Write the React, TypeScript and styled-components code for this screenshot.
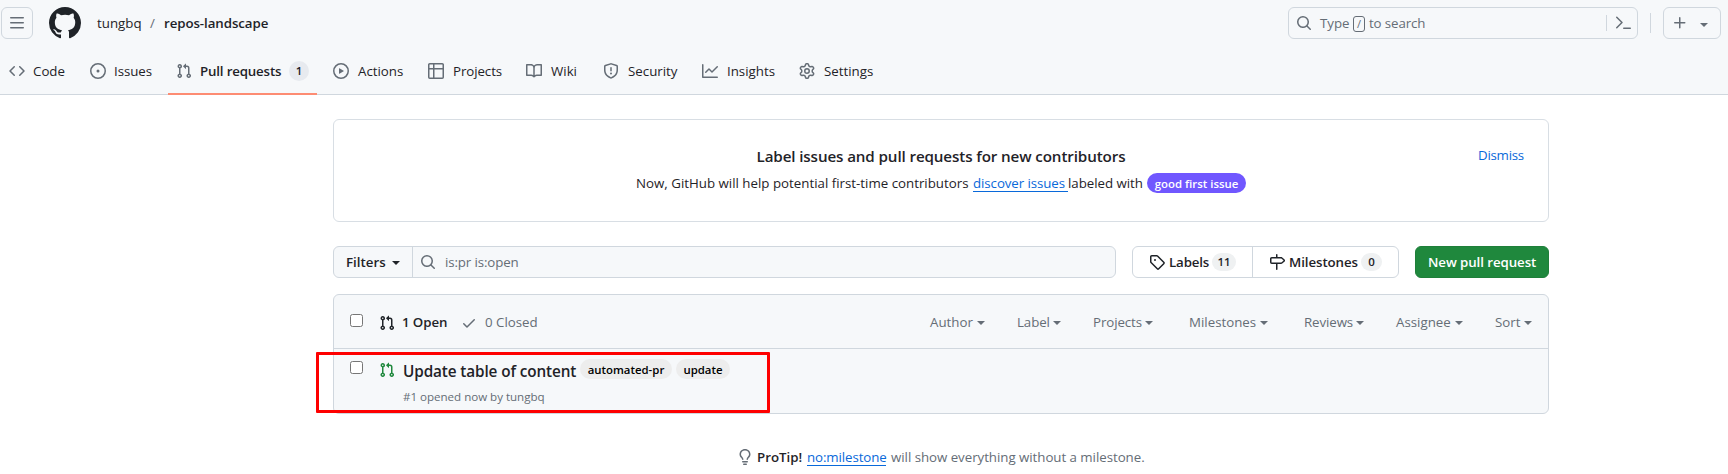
import React from 'react';
import styled, { createGlobalStyle, css } from 'styled-components';

const c = {
  fg: '#1f2328',
  muted: '#656d76',
  border: '#d0d7de',
  subtle: '#f6f8fa',
  link: '#0969da',
  green: '#1f883d',
};

const GlobalStyle = createGlobalStyle`
  *, *::before, *::after { box-sizing: border-box; }
  body {
    margin: 0;
    background: #fff;
    color: ${c.fg};
    font-family: 'Open Sans', 'Noto Sans', sans-serif;
    font-size: 13.3px;
    line-height: 20px;
    overflow: hidden;
  }
`;

const paths = {
  bars: 'M1 2.75A.75.75 0 0 1 1.75 2h12.5a.75.75 0 0 1 0 1.5H1.75A.75.75 0 0 1 1 2.75Zm0 5A.75.75 0 0 1 1.75 7h12.5a.75.75 0 0 1 0 1.5H1.75A.75.75 0 0 1 1 7.75ZM1.75 12h12.5a.75.75 0 0 1 0 1.5H1.75a.75.75 0 0 1 0-1.5Z',
  github: 'M8 0c4.42 0 8 3.58 8 8a8.013 8.013 0 0 1-5.45 7.59c-.4.08-.55-.17-.55-.38 0-.27.01-1.13.01-2.2 0-.75-.25-1.23-.54-1.48 1.78-.2 3.65-.88 3.65-3.95 0-.88-.31-1.59-.82-2.15.08-.2.36-1.02-.08-2.12 0 0-.67-.22-2.2.82-.64-.18-1.32-.27-2-.27-.68 0-1.36.09-2 .27-1.53-1.03-2.2-.82-2.2-.82-.44 1.1-.16 1.92-.08 2.12-.51.56-.82 1.28-.82 2.15 0 3.06 1.86 3.75 3.64 3.95-.23.2-.44.55-.51 1.07-.46.21-1.61.55-2.33-.66-.15-.24-.6-.83-1.23-.82-.67.01-.27.38.01.53.34.19.73.9.82 1.13.16.45.68 1.31 2.69.94 0 .67.01 1.3.01 1.49 0 .21-.15.45-.55.38A7.995 7.995 0 0 1 0 8c0-4.42 3.58-8 8-8Z',
  code: 'm11.28 3.22 4.25 4.25a.75.75 0 0 1 0 1.06l-4.25 4.25a.749.749 0 0 1-1.275-.326.749.749 0 0 1 .215-.734L13.94 8l-3.72-3.72a.749.749 0 0 1 .326-1.275.749.749 0 0 1 .734.215Zm-6.56 0a.751.751 0 0 1 1.042.018.751.751 0 0 1 .018 1.042L2.06 8l3.72 3.72a.749.749 0 0 1-.326 1.275.749.749 0 0 1-.734-.215L.47 8.53a.75.75 0 0 1 0-1.06Z',
  issue: 'M8 9.5a1.5 1.5 0 1 0 0-3 1.5 1.5 0 0 0 0 3Z M8 0a8 8 0 1 1 0 16A8 8 0 0 1 8 0ZM1.5 8a6.5 6.5 0 1 0 13 0 6.5 6.5 0 0 0-13 0Z',
  pr: 'M1.5 3.25a2.25 2.25 0 1 1 3 2.122v5.256a2.251 2.251 0 1 1-1.5 0V5.372A2.25 2.25 0 0 1 1.5 3.25Zm5.677-.177L9.573.677A.25.25 0 0 1 10 .854V2.5h1A2.5 2.5 0 0 1 13.5 5v5.628a2.251 2.251 0 1 1-1.5 0V5a1 1 0 0 0-1-1h-1v1.646a.25.25 0 0 1-.427.177L7.177 3.427a.25.25 0 0 1 0-.354ZM3.75 2.5a.75.75 0 1 0 0 1.5.75.75 0 0 0 0-1.5Zm0 9.5a.75.75 0 1 0 0 1.5.75.75 0 0 0 0-1.5Zm8.25.75a.75.75 0 1 0 1.5 0 .75.75 0 0 0-1.5 0Z',
  play: 'M8 0a8 8 0 1 1 0 16A8 8 0 0 1 8 0ZM1.5 8a6.5 6.5 0 1 0 13 0 6.5 6.5 0 0 0-13 0Zm4.879-2.773 4.264 2.559a.25.25 0 0 1 0 .428l-4.264 2.559A.25.25 0 0 1 6 10.559V5.442a.25.25 0 0 1 .379-.215Z',
  table: 'M0 1.75C0 .784.784 0 1.75 0h12.5C15.216 0 16 .784 16 1.75v12.5A1.75 1.75 0 0 1 14.25 16H1.75A1.75 1.75 0 0 1 0 14.25ZM6.5 6.5v8h7.75a.25.25 0 0 0 .25-.25V6.5Zm8-1.5V1.75a.25.25 0 0 0-.25-.25H6.5V5Zm-13 1.5v7.75c0 .138.112.25.25.25H5v-8ZM5 5V1.5H1.75a.25.25 0 0 0-.25.25V5Z',
  book: 'M0 1.75A.75.75 0 0 1 .75 1h4.253c1.227 0 2.317.59 3 1.501A3.743 3.743 0 0 1 11.006 1h4.245a.75.75 0 0 1 .75.75v10.5a.75.75 0 0 1-.75.75h-4.507a2.25 2.25 0 0 0-1.591.659l-.622.621a.75.75 0 0 1-1.06 0l-.622-.621A2.25 2.25 0 0 0 5.258 13H.75a.75.75 0 0 1-.75-.75Zm7.251 10.324.004-5.073-.002-2.253A2.25 2.25 0 0 0 5.003 2.5H1.5v9h3.757a3.75 3.75 0 0 1 1.994.574ZM8.755 4.75l-.004 7.322a3.752 3.752 0 0 1 1.992-.572H14.5v-9h-3.495a2.25 2.25 0 0 0-2.25 2.25Z',
  shield: 'M7.467.133a1.748 1.748 0 0 1 1.066 0l5.25 1.68A1.75 1.75 0 0 1 15 3.48V7c0 1.566-.32 3.182-1.303 4.682-.983 1.498-2.585 2.813-5.032 3.855a1.697 1.697 0 0 1-1.33 0c-2.447-1.042-4.049-2.357-5.032-3.855C1.32 10.182 1 8.566 1 7V3.48a1.75 1.75 0 0 1 1.217-1.667Zm.61 1.429a.25.25 0 0 0-.153 0l-5.25 1.68a.25.25 0 0 0-.174.238V7c0 1.358.275 2.666 1.057 3.86.784 1.194 2.121 2.34 4.366 3.297a.196.196 0 0 0 .154 0c2.245-.956 3.582-2.104 4.366-3.298C13.225 9.666 13.5 8.36 13.5 7V3.48a.251.251 0 0 0-.174-.237l-5.25-1.68ZM8.75 4.75v3a.75.75 0 0 1-1.5 0v-3a.75.75 0 0 1 1.5 0ZM9 10.5a1 1 0 1 1-2 0 1 1 0 0 1 2 0Z',
  graph: 'M1.5 1.75V13.5h13.75a.75.75 0 0 1 0 1.5H.75a.75.75 0 0 1-.75-.75V1.75a.75.75 0 0 1 1.5 0Zm14.28 2.53-5.25 5.25a.75.75 0 0 1-1.06 0L7 7.06 4.28 9.78a.751.751 0 0 1-1.042-.018.751.751 0 0 1-.018-1.042l3.25-3.25a.75.75 0 0 1 1.06 0L10 7.94l4.72-4.72a.751.751 0 0 1 1.042.018.751.751 0 0 1 .018 1.042Z',
  gear: 'M8 0a8.2 8.2 0 0 1 .701.031C9.444.095 9.99.645 10.16 1.29l.288 1.107c.018.066.079.158.212.224.231.114.454.243.668.386.123.082.233.09.299.071l1.103-.303c.644-.176 1.392.021 1.82.63.27.385.506.792.704 1.218.315.675.111 1.422-.364 1.891l-.814.806c-.049.048-.098.147-.088.294.016.257.016.515 0 .772-.01.147.038.246.088.294l.814.806c.475.469.679 1.216.364 1.891a7.977 7.977 0 0 1-.704 1.217c-.428.61-1.176.807-1.82.63l-1.102-.302c-.067-.019-.177-.011-.3.071a5.909 5.909 0 0 1-.668.386c-.133.066-.194.158-.211.224l-.29 1.106c-.168.646-.715 1.196-1.458 1.26a8.006 8.006 0 0 1-1.402 0c-.743-.064-1.289-.614-1.458-1.26l-.289-1.106c-.018-.066-.079-.158-.212-.224a5.738 5.738 0 0 1-.668-.386c-.123-.082-.233-.09-.299-.071l-1.103.303c-.644.176-1.392-.021-1.82-.63a8.12 8.12 0 0 1-.704-1.218c-.315-.675-.111-1.422.363-1.891l.815-.806c.05-.048.098-.147.088-.294a6.214 6.214 0 0 1 0-.772c.01-.147-.038-.246-.088-.294l-.815-.806C.635 6.045.431 5.298.746 4.623a7.92 7.92 0 0 1 .704-1.217c.428-.61 1.176-.807 1.82-.63l1.102.302c.067.019.177.011.3-.071.214-.143.437-.272.668-.386.133-.066.194-.158.211-.224l.29-1.106C6.009.645 6.556.095 7.299.03 7.53.01 7.764 0 8 0Zm-.571 1.525c-.036.003-.108.036-.137.146l-.289 1.105c-.147.561-.549.967-.998 1.189-.173.086-.34.183-.5.29-.417.278-.97.423-1.529.27l-1.103-.303c-.109-.03-.175.016-.195.045-.22.312-.412.644-.573.99-.014.031-.021.11.059.19l.815.806c.411.406.562.957.53 1.456a4.709 4.709 0 0 0 0 .582c.032.499-.119 1.05-.53 1.456l-.815.806c-.081.08-.073.159-.059.19.162.346.353.677.573.989.02.03.085.076.195.046l1.102-.303c.56-.153 1.113-.008 1.53.27.161.107.328.204.501.29.447.222.85.629.997 1.189l.289 1.105c.029.109.101.143.137.146a6.6 6.6 0 0 0 1.142 0c.036-.003.108-.036.137-.146l.289-1.105c.147-.561.549-.967.998-1.189.173-.086.34-.183.5-.29.417-.278.97-.423 1.529-.27l1.103.303c.109.029.175-.016.195-.045.22-.313.411-.644.573-.99.014-.031.021-.11-.059-.19l-.815-.806c-.411-.406-.562-.957-.53-1.456a4.709 4.709 0 0 0 0-.582c-.032-.499.119-1.05.53-1.456l.815-.806c.081-.08.073-.159.059-.19a6.464 6.464 0 0 0-.573-.989c-.02-.03-.085-.076-.195-.046l-1.102.303c-.56.153-1.113.008-1.53-.27a4.44 4.44 0 0 0-.501-.29c-.447-.222-.85-.629-.997-1.189l-.289-1.105c-.029-.11-.101-.143-.137-.146a6.6 6.6 0 0 0-1.142 0ZM11 8a3 3 0 1 1-6 0 3 3 0 0 1 6 0ZM9.5 8a1.5 1.5 0 1 0-3.001.001A1.5 1.5 0 0 0 9.5 8Z',
  search: 'M10.68 11.74a6 6 0 0 1-7.922-8.982 6 6 0 0 1 8.982 7.922l3.04 3.04a.749.749 0 0 1-.326 1.275.749.749 0 0 1-.734-.215ZM11.5 7a4.499 4.499 0 1 0-8.997 0A4.499 4.499 0 0 0 11.5 7Z',
  plus: 'M7.75 2a.75.75 0 0 1 .75.75V7h4.25a.75.75 0 0 1 0 1.5H8.5v4.25a.75.75 0 0 1-1.5 0V8.5H2.75a.75.75 0 0 1 0-1.5H7V2.75A.75.75 0 0 1 7.75 2Z',
  prompt: 'M1.22 1.72a.75.75 0 0 1 1.06 0l5.25 5.25a.75.75 0 0 1 0 1.06l-5.25 5.25a.75.75 0 0 1-1.06-1.06L5.94 7.5 1.22 2.78a.75.75 0 0 1 0-1.06ZM8.75 12.5h6.5a.75.75 0 0 1 0 1.5h-6.5a.75.75 0 0 1 0-1.5Z',
  tag: 'M1 7.775V2.75C1 1.784 1.784 1 2.75 1h5.025c.464 0 .91.184 1.238.513l6.25 6.25a1.75 1.75 0 0 1 0 2.474l-5.026 5.026a1.75 1.75 0 0 1-2.474 0l-6.25-6.25A1.752 1.752 0 0 1 1 7.775Zm1.5 0c0 .066.026.13.073.177l6.25 6.25a.25.25 0 0 0 .354 0l5.025-5.025a.25.25 0 0 0 0-.354l-6.25-6.25a.25.25 0 0 0-.177-.073H2.75a.25.25 0 0 0-.25.25ZM6 5a1 1 0 1 1 0 2 1 1 0 0 1 0-2Z',
  milestone: 'M7.75 0a.75.75 0 0 1 .75.75V3h3.634c.414 0 .814.147 1.13.414l2.07 1.75a1.75 1.75 0 0 1 0 2.672l-2.07 1.75a1.75 1.75 0 0 1-1.13.414H8.5v5.25a.75.75 0 0 1-1.5 0V10H2.75A1.75 1.75 0 0 1 1 8.25v-3.5C1 3.784 1.784 3 2.75 3H7V.75A.75.75 0 0 1 7.75 0Zm4.384 8.5a.25.25 0 0 0 .161-.06l2.07-1.75a.248.248 0 0 0 0-.38l-2.07-1.75a.25.25 0 0 0-.161-.06H2.75a.25.25 0 0 0-.25.25v3.5c0 .138.112.25.25.25h9.384Z',
  check: 'M13.78 4.22a.75.75 0 0 1 0 1.06l-7.25 7.25a.75.75 0 0 1-1.06 0L2.22 9.28a.751.751 0 0 1 .018-1.042.751.751 0 0 1 1.042-.018L6 10.94l6.72-6.72a.75.75 0 0 1 1.06 0Z',
  bulb: 'M8 1.5c-2.363 0-4 1.69-4 3.75 0 .984.424 1.625.984 2.304l.214.253c.223.264.47.556.673.848.284.411.537.896.621 1.49a.75.75 0 0 1-1.484.211c-.04-.282-.163-.547-.37-.847a8.456 8.456 0 0 0-.542-.68c-.084-.1-.173-.205-.268-.32C3.201 7.75 2.5 6.766 2.5 5.25 2.5 2.31 4.863 0 8 0s5.5 2.31 5.5 5.25c0 1.516-.701 2.5-1.328 3.259-.095.115-.184.22-.268.319-.207.245-.383.453-.541.681-.208.3-.33.565-.37.847a.751.751 0 0 1-1.485-.212c.084-.593.337-1.078.621-1.489.203-.292.45-.584.673-.848.075-.088.147-.173.213-.253.561-.679.985-1.32.985-2.304 0-2.06-1.637-3.75-4-3.75ZM5.75 12h4.5a.75.75 0 0 1 0 1.5h-4.5a.75.75 0 0 1 0-1.5ZM6 15.25a.75.75 0 0 1 .75-.75h2.5a.75.75 0 0 1 0 1.5h-2.5a.75.75 0 0 1-.75-.75Z',
};

const Svg = styled.svg`
  display: block;
  flex: none;
  fill: currentColor;
`;

function Icon({ name, size = 16, color }: { name: keyof typeof paths; size?: number; color?: string }) {
  return (
    <Svg width={size} height={size} viewBox="0 0 16 16" color={color} aria-hidden>
      <path fillRule="evenodd" d={paths[name]} />
    </Svg>
  );
}

const Label = styled.span<{ $w: number; $ls?: number; $bold?: boolean; $ml?: number }>`
  flex: none;
  width: ${p => p.$w}px;
  margin-left: ${p => p.$ml ?? 0}px;
  white-space: nowrap;
  letter-spacing: ${p => p.$ls ?? 0}px;
  font-weight: ${p => (p.$bold ? 600 : 400)};
`;

/* Header */
const Header = styled.header`
  height: 95px;
  background: ${c.subtle};
  border-bottom: 1px solid ${c.border};
`;
const TopBar = styled.div`
  display: flex;
  align-items: center;
  height: 46px;
  padding: 0 7px 0 1px;
`;
const Button = styled.button`
  display: flex;
  align-items: center;
  justify-content: center;
  flex: none;
  width: 32px;
  height: 32px;
  padding: 0;
  border: 1px solid ${c.border};
  border-radius: 6px;
  background: transparent;
  color: ${c.muted};
  font: inherit;
`;
const AddButton = styled(Button)`
  width: 58px;
  justify-content: flex-start;
  padding-left: 8px;
`;
const Logo = styled.div`
  margin: 0 16px;
`;
const Slash = styled.span`
  width: 21px;
  padding-left: 7px;
  color: ${c.muted};
`;
const Search = styled.div`
  display: flex;
  align-items: center;
  width: 350px;
  height: 32px;
  margin-left: auto;
  padding: 0 6px 0 7px;
  border: 1px solid ${c.border};
  border-radius: 6px;
  color: ${c.muted};
`;
const Key = styled.kbd`
  display: flex;
  align-items: center;
  justify-content: center;
  width: 12px;
  height: 16px;
  margin: 1px 4px 0;
  border: 1px solid ${c.muted};
  border-radius: 3px;
  font: 11px/14px 'Open Sans', sans-serif;
`;
const Rule = styled.i<{ $h: number; $m: string }>`
  width: 1px;
  height: ${p => p.$h}px;
  margin: ${p => p.$m};
  background: ${c.border};
`;
const Nav = styled.nav`
  display: flex;
  gap: 8px;
  height: 49px;
  padding-left: 1px;
`;
const Tab = styled.a<{ $active?: boolean }>`
  display: flex;
  align-items: center;
  gap: 8px;
  height: 49px;
  padding: 0 8px;
  color: ${c.fg};
  ${p => p.$active && css`
    box-shadow: inset 0 -2px #fd8c73;
  `}
  svg { color: ${c.muted}; }
`;
const Counter = styled.span<{ $w: number; $bg?: string }>`
  flex: none;
  width: ${p => p.$w}px;
  height: ${p => (p.$bg ? 20 : 18)}px;
  border-radius: 10px;
  background: ${p => p.$bg ?? '#eff1f2'};
  font-size: 11.5px;
  font-weight: 600;
  line-height: ${p => (p.$bg ? 20 : 18)}px;
  text-align: center;
`;

/* Content */
const Main = styled.main`
  width: 1216px;
  margin: 24px 0 0 333px;
`;
const Banner = styled.section`
  display: flex;
  height: 103px;
  padding: 24px 24px 0;
  border: 1px solid #d8dee4;
  border-radius: 6px;
`;
const BannerBody = styled.div`
  display: flex;
  flex-direction: column;
  align-items: center;
  flex: 1;
  padding-left: 46px;
`;
const BannerTitle = styled.h3`
  width: 369px;
  margin: 0;
  font-size: 15.2px;
  font-weight: 600;
  letter-spacing: -0.12px;
  line-height: 24px;
  white-space: nowrap;
`;
const BannerText = styled.p`
  display: flex;
  align-items: center;
  height: 20px;
  margin: 5px 0 0;
`;
const Link = styled(Label)`
  height: 18px;
  line-height: 19px;
  border-bottom: 1px solid ${c.link};
  color: ${c.link};
`;
const Dismiss = styled.a`
  width: 46px;
  padding-top: 1px;
  color: ${c.link};
  letter-spacing: -0.25px;
`;
const Pill = styled.span<{ $w: number; $accent?: boolean }>`
  flex: none;
  width: ${p => p.$w}px;
  height: 20px;
  border-radius: 10px;
  background: ${p => (p.$accent ? '#7057ff' : '#ededed')};
  color: ${p => (p.$accent ? '#fff' : '#000')};
  font-size: 11.4px;
  font-weight: 600;
  line-height: 21px;
  text-align: center;
  white-space: nowrap;
`;
const Toolbar = styled.div`
  display: flex;
  gap: 16px;
  height: 32px;
  margin-top: 24px;
`;
const FilterBox = styled.div`
  display: flex;
  flex: 1;
  border: 1px solid ${c.border};
  border-radius: 6px;
  background: ${c.subtle};
`;
const FilterToggle = styled.div`
  display: flex;
  align-items: center;
  width: 79px;
  padding-left: 12px;
  border-right: 1px solid ${c.border};
`;
const Caret = styled.i<{ $ml: number; $mt?: number }>`
  width: 0;
  height: 0;
  margin: ${p => p.$mt ?? 1}px 0 0 ${p => p.$ml}px;
  border: 4px solid transparent;
  border-top-color: currentColor;
  border-bottom: 0;
`;
const FilterInput = styled.div`
  display: flex;
  align-items: center;
  gap: 9px;
  padding-left: 7px;
  color: ${c.muted};
`;
const Group = styled.div`
  display: flex;
  border: 1px solid ${c.border};
  border-radius: 6px;
`;
const GroupItem = styled.a<{ $w: number }>`
  display: flex;
  align-items: center;
  gap: 4px;
  width: ${p => p.$w}px;
  padding-left: 16px;
  & + & { border-left: 1px solid ${c.border}; }
`;
const Primary = styled(Button)`
  width: 134px;
  border-color: #1f7f3a;
  background: ${c.green};
  color: #fff;
`;
const List = styled.section`
  position: relative;
  height: 120px;
  margin-top: 16px;
  border: 1px solid ${c.border};
  border-radius: 6px;
  background: ${c.subtle};
`;
const ListHeader = styled.div`
  display: flex;
  align-items: center;
  height: 54px;
  padding: 0 16px;
  border-bottom: 1px solid ${c.border};
  color: ${c.muted};
`;
const Checkbox = styled.span`
  flex: none;
  width: 13px;
  height: 13px;
  border: 1px solid #767676;
  border-radius: 2.5px;
  background: #fff;
`;
const HeaderCheck = styled.div`
  padding-bottom: 2px;
`;
const State = styled.div<{ $current?: boolean; $gap: number; $ml: number }>`
  display: flex;
  align-items: center;
  gap: ${p => p.$gap}px;
  margin-left: ${p => p.$ml}px;
  color: ${p => (p.$current ? c.fg : c.muted)};
  svg { margin-top: 2px; }
`;
const Menus = styled.div`
  display: flex;
  margin-left: auto;
`;
const Menu = styled.div<{ $mr: number }>`
  display: flex;
  align-items: center;
  margin-right: ${p => p.$mr}px;
`;
const Row = styled.div`
  display: flex;
  padding: 10px 16px 0;
`;
const RowCheck = styled.div`
  padding: 2px 16px 0 0;
`;
const RowIcon = styled.div`
  padding-top: 3px;
`;
const RowBody = styled.div`
  padding-left: 8px;
`;
const RowTitle = styled.div`
  display: flex;
  gap: 4px;
`;
const Title = styled(Label)`
  font-size: 15.3px;
  line-height: 25px;
`;
const Meta = styled.div`
  margin-top: 4px;
  color: ${c.muted};
  font-size: 11.6px;
  letter-spacing: -0.03px;
  line-height: 18px;
`;
/* Annotation frame lying over the highlighted row */
const Highlight = styled.div`
  position: absolute;
  top: 57px;
  left: -18px;
  width: 454px;
  height: 61px;
  border: 3px solid #fe0000;
  border-radius: 1px;
`;
const Tip = styled.footer`
  display: flex;
  align-items: center;
  margin: 33px 0 0 404px;
  color: ${c.muted};
`;
const Strong = styled(Label)`
  color: ${c.fg};
`;

type Name = keyof typeof paths;
const tabs: { icon: Name; text: string; w: number; ml?: number; ls?: number; count?: string }[] = [
  { icon: 'code', text: 'Code', w: 33 },
  { icon: 'issue', text: 'Issues', w: 38, ls: -0.05 },
  { icon: 'pr', text: 'Pull requests', w: 81, ls: -0.17, count: '1' },
  { icon: 'play', text: 'Actions', w: 46, ml: 1 },
  { icon: 'table', text: 'Projects', w: 49, ml: 1, ls: -0.08 },
  { icon: 'book', text: 'Wiki', w: 28, ml: 1 },
  { icon: 'shield', text: 'Security', w: 50, ml: 1 },
  { icon: 'graph', text: 'Insights', w: 48, ml: 1 },
  { icon: 'gear', text: 'Settings', w: 50, ml: 1 },
];
const menus = [
  { text: 'Author', w: 43, mr: 32 },
  { text: 'Label', w: 33, mr: 32, ls: -0.1 },
  { text: 'Projects', w: 48, mr: 36, ls: -0.1 },
  { text: 'Milestones', w: 67, mr: 36 },
  { text: 'Reviews', w: 48, mr: 32, ls: -0.1 },
  { text: 'Assignee', w: 55, mr: 32 },
  { text: 'Sort', w: 25, mr: 0 },
];

export default function App() {
  return (
    <>
      <GlobalStyle />
      <Header>
        <TopBar>
          <Button aria-label="Menu"><Icon name="bars" /></Button>
          <Logo><Icon name="github" size={32} /></Logo>
          <Label $w={46}>tungbq</Label>
          <Slash>/</Slash>
          <Label $w={106} $bold $ls={-0.08}>repos-landscape</Label>
          <Search>
            <Icon name="search" />
            <Label $w={29} $ml={8}>Type</Label>
            <Key>/</Key>
            <Label $w={60} $ls={-0.12}>to search</Label>
            <Rule $h={16} $m="0 8px 0 auto" />
            <Icon name="prompt" />
          </Search>
          <Rule $h={20} $m="0 12px" />
          <AddButton aria-label="Create new">
            <Icon name="plus" />
            <Caret $ml={12} $mt={3} />
          </AddButton>
        </TopBar>
        <Nav>
          {tabs.map(t => (
            <Tab key={t.text} $active={!!t.count}>
              <Icon name={t.icon} />
              <Label $w={t.w} $ml={t.ml} $ls={t.ls} $bold={!!t.count}>{t.text}</Label>
              {t.count && <Counter $w={20} $bg="#e7eaef">{t.count}</Counter>}
            </Tab>
          ))}
        </Nav>
      </Header>
      <Main>
        <Banner>
          <BannerBody>
            <BannerTitle>Label issues and pull requests for new contributors</BannerTitle>
            <BannerText>
              <Label $w={337}>Now, GitHub will help potential first-time contributors</Label>
              <Link $w={95} $ls={-0.08}>discover issues</Link>
              <Label $w={79} $ls={-0.03}>labeled with</Label>
              <Pill $w={99} $accent>good first issue</Pill>
            </BannerText>
          </BannerBody>
          <Dismiss>Dismiss</Dismiss>
        </Banner>
        <Toolbar>
          <FilterBox>
            <FilterToggle>
              <Label $w={38} $bold>Filters</Label>
              <Caret $ml={8} />
            </FilterToggle>
            <FilterInput>
              <Icon name="search" />
              <Label $w={74} $ls={-0.12}>is:pr is:open</Label>
            </FilterInput>
          </FilterBox>
          <Group>
            <GroupItem $w={119}>
              <Icon name="tag" />
              <Label $w={39} $bold $ls={-0.15}>Labels</Label>
              <Counter $w={24}>11</Counter>
            </GroupItem>
            <GroupItem $w={146}>
              <Icon name="milestone" />
              <Label $w={68} $bold $ls={-0.08}>Milestones</Label>
              <Counter $w={21}>0</Counter>
            </GroupItem>
          </Group>
          <Primary><Label $w={108} $bold $ls={-0.08}>New pull request</Label></Primary>
        </Toolbar>
        <List>
          <ListHeader>
            <HeaderCheck><Checkbox as="div" /></HeaderCheck>
            <State $current $gap={7} $ml={16}>
              <Icon name="pr" />
              <Label $w={46} $bold $ls={-0.1}>1 Open</Label>
            </State>
            <State $gap={8} $ml={13}>
              <Icon name="check" />
              <Label $w={54}>0 Closed</Label>
            </State>
            <Menus>
              {menus.map(m => (
                <Menu key={m.text} $mr={m.mr}>
                  <Label $w={m.w} $ls={m.ls}>{m.text}</Label>
                  <Caret $ml={m.text === 'Label' ? 3 : 4} $mt={3} />
                </Menu>
              ))}
            </Menus>
          </ListHeader>
          <Row>
            <RowCheck><Checkbox as="div" /></RowCheck>
            <RowIcon><Icon name="pr" color={c.green} /></RowIcon>
            <RowBody>
              <RowTitle>
                <Title $w={173} $bold $ls={-0.11}>Update table of content</Title>
                <Pill $w={92}>automated-pr</Pill>
                <Pill $w={54}>update</Pill>
              </RowTitle>
              <Meta>#1 opened now by tungbq</Meta>
            </RowBody>
          </Row>
          <Highlight />
        </List>
        <Tip>
          <Icon name="bulb" />
          <Strong $w={46} $ml={4} $bold>ProTip!</Strong>
          <Link $w={79} $ml={4} $ls={-0.1}>no:milestone</Link>
          <Label $w={254} $ml={5} $ls={-0.04}>will show everything without a milestone.</Label>
        </Tip>
      </Main>
    </>
  );
}
